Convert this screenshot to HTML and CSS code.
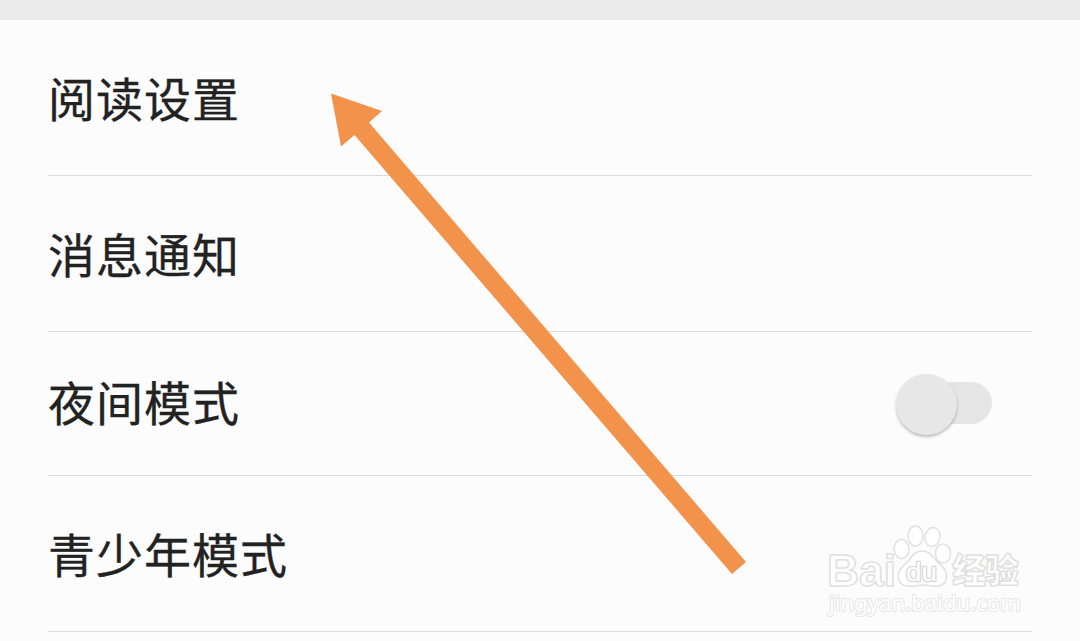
FILE: index.html
```html
<!DOCTYPE html>
<html lang="zh-CN">

<head>
    <meta charset="UTF-8">
    <meta name="viewport" content="width=device-width, initial-scale=1.0">
    <title>设置</title>
    <link rel="stylesheet" href="styles.css">
</head>

<body>

    <div class="top-bar"></div>

    <ul class="settings">
        <li class="item">阅读设置</li>
        <li class="item">消息通知</li>
        <li class="item item-switch">
            夜间模式
            <span class="switch"><span class="knob"></span></span>
        </li>
        <li class="item">青少年模式</li>
    </ul>

    <svg class="arrow" width="420" height="485" viewBox="330 92 420 485">
        <polygon fill="#f3924a" points="331,93.500 382,111 369,122.500 746,562 732,574 354.500,135 341,146.500" />
    </svg>

    <svg class="watermark" width="210" height="110" viewBox="820 515 210 110">
        <g class="mark">
            <text class="latin" x="827" y="585.500" font-size="44" textLength="69" lengthAdjust="spacingAndGlyphs">Bai</text>
            <ellipse cx="901.500" cy="549" rx="7.500" ry="9.500" />
            <ellipse cx="915.500" cy="536" rx="7.500" ry="10" />
            <ellipse cx="932.500" cy="537" rx="7.500" ry="9.500" transform="rotate(12 932.500 537)" />
            <ellipse cx="943" cy="553.500" rx="7.500" ry="9.500" />
            <path d="M922 551c-6 0-9 3-12 8-3 4-7 6-10 11-4 7-1 15 7 16 6 1 10-1 16-1s11 2 16 1c8-2 9-10 6-16-3-5-7-7-10-11-4-5-7-8-13-8z" />
            <text class="du" x="906" y="581" font-size="26" textLength="31" lengthAdjust="spacingAndGlyphs">du</text>
            <text class="han" x="952" y="583" font-size="34" textLength="67">经验</text>
            <text class="url" x="829" y="611" font-size="22" textLength="192" lengthAdjust="spacingAndGlyphs">jingyan.baidu.com</text>
        </g>
    </svg>

</body>

</html>
```
FILE: styles.css
```css
body {
    margin: 0;
    height: 641px;
    overflow: hidden;
    position: relative;
    background-color: #fcfcfc;
    color: #222;
    font-family: "Noto Sans CJK SC", sans-serif;
}

.top-bar {
    height: 20px;
    background-color: #eaeaea;
}

.settings {
    list-style: none;
    margin: 0;
    padding: 0 48px;
}

.item {
    display: flex;
    align-items: center;
    justify-content: space-between;
    box-sizing: border-box;
    height: 156px;
    padding-bottom: 2px;
    border-bottom: 1px solid #dadada;
    font-size: 47px;
    letter-spacing: 1px;
    line-height: 72px;
    -webkit-text-stroke: 0.3px #222;
}

.item-switch {
    height: 144px;
    padding-bottom: 6px;
}

/* Switch */
.switch {
    display: flex;
    align-items: center;
    width: 92px;
    height: 42px;
    margin: 5px 40px 0 0;
    border-radius: 21px;
    background: linear-gradient(to right, transparent 30px, #e5e5e5 30px);
}

.knob {
    width: 61px;
    height: 61px;
    margin: 2px 0 0 -4px;
    border-radius: 50%;
    background-color: #e7e7e7;
    box-shadow: 0 2px 3px rgba(0, 0, 0, 0.25);
}

/* Pointer arrow over the list */
.arrow {
    position: absolute;
    left: 330px;
    top: 92px;
}

/* Watermark */
.watermark {
    position: absolute;
    left: 820px;
    top: 515px;
}

.mark {
    fill: #fff;
    stroke: #e0e0e0;
    stroke-width: 1.5px;
    stroke-linejoin: round;
}

.latin {
    font-family: "Liberation Sans", sans-serif;
    font-weight: bold;
}

.du {
    font-family: "Liberation Sans", sans-serif;
    font-weight: normal;
    stroke: #d8d8d8;
    stroke-width: 2.5px;
    paint-order: stroke;
}

.han {
    font-weight: 900;
}

.url {
    font-family: "Noto Sans", sans-serif;
    font-weight: normal;
    stroke: #e6e6e6;
    stroke-width: 2px;
    paint-order: stroke;
}
```
